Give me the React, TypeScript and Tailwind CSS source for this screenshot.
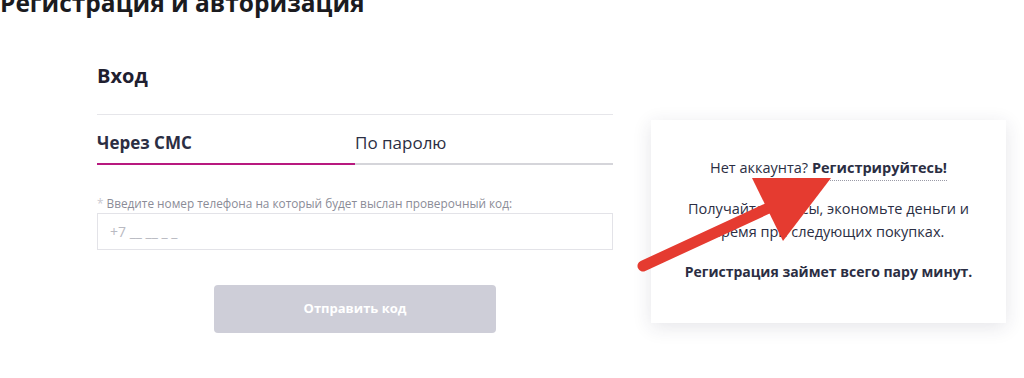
import React from 'react';

const font = { fontFamily: '"Open Sans", "Noto Sans", sans-serif' };

function Arrow() {
  return (
    <svg className="pointer-events-none absolute left-0 top-0" width="1024" height="378" viewBox="0 0 1024 378">
      <line x1="643" y1="266" x2="775" y2="205" stroke="#e53b30" strokeWidth="11" strokeLinecap="round" />
      <polygon points="752,178 831,178 783,241" fill="#e53b30" />
    </svg>
  );
}

export default function App() {
  return (
    <div className="relative h-[378px] w-[1024px] overflow-hidden bg-white text-[#2b2e43]" style={font}>
      <h1 className="-mt-[14px] text-[24.5px] font-bold leading-[34px] text-[#1b1b1f]">Регистрация и авторизация</h1>

      <div className="flex">
        <div className="ml-[97px] w-[516px]">
          <h2 className="mt-[42px] text-[20px] font-bold leading-[28px] text-[#1f2030]">Вход</h2>
          <div className="mt-[24px] h-px bg-[#e6e6ea]" />

          <div className="mt-[15px] flex">
            <div className="w-[258px] border-b-2 border-[#b8197f] pb-[8px] text-[17px] font-bold leading-[25px]">Через СМС</div>
            <div className="flex-1 border-b-2 border-[#d5d5da] pb-[8px] text-[17px] leading-[25px]">По паролю</div>
          </div>

          <p className="mt-[30px] text-[11.8px] leading-[16px] text-[#8b8c97]">
            <span className="text-[#c9c9d0]">*</span> Введите номер телефона на который будет выслан проверочный код:
          </p>
          <div className="mt-[2px] flex h-[37px] items-center border border-[#e3e3e8] px-[12px] text-[14px] text-[#b9bac2]">
            +7 __ __ _ _
          </div>

          <div className="mt-[35px] flex justify-center">
            <button className="h-[48px] w-[282px] rounded-[4px] bg-[#ceced8] text-[13px] font-bold text-white">Отправить код</button>
          </div>
        </div>

        <div className="ml-[38px] mt-[100px] flex h-[203px] w-[355px] flex-col items-center bg-white px-[20px] pt-[36px] text-center text-[14.5px] leading-[23px] shadow-[0_4px_18px_rgba(40,40,70,0.12)]">
          <p>
            Нет аккаунта?{' '}
            <span className="border-b border-dotted border-[#9a9aa6] pb-[3px] font-bold">Регистрируйтесь!</span>
          </p>
          <p className="mt-[18px]">Получайте бонусы, экономьте деньги и время при следующих покупках.</p>
          <p className="mt-[17px] text-[14px] font-bold">Регистрация займет всего пару минут.</p>
        </div>
      </div>

      <Arrow />
    </div>
  );
}
